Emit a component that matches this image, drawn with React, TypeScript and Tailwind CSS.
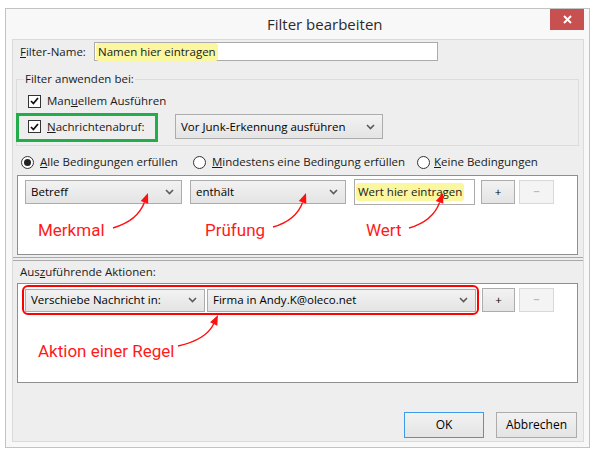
import React from "react";

type Pt = [number, number];

// Curved red pointer: quadratic curve from the label toward the control, with a filled head.
function Pointer({ s, t }: { s: Pt; t: Pt }) {
  const c: Pt = [s[0] + 0.7 * (t[0] - s[0]), s[1] - 0.2 * (s[1] - t[1])];
  const dx = t[0] - c[0];
  const dy = t[1] - c[1];
  const len = Math.hypot(dx, dy);
  const ux = dx / len;
  const uy = dy / len;
  const b: Pt = [t[0] - 10 * ux, t[1] - 10 * uy];
  const nx = -uy;
  const ny = ux;
  const p1: Pt = [b[0] + 4 * nx, b[1] + 4 * ny];
  const p2: Pt = [b[0] - 4 * nx, b[1] - 4 * ny];
  return (
    <g>
      <path
        d={`M${s[0]} ${s[1]} Q${c[0]} ${c[1]} ${b[0]} ${b[1]}`}
        fill="none"
        stroke="#ff1010"
        strokeWidth={1.4}
      />
      <polygon points={`${t[0]},${t[1]} ${p1[0]},${p1[1]} ${p2[0]},${p2[1]}`} fill="#ff1010" />
    </g>
  );
}

function Chevron() {
  return (
    <svg width="9" height="6" viewBox="0 0 9 6" className="shrink-0">
      <path d="M1 1 L4.5 4.5 L8 1" fill="none" stroke="#5b5b5b" strokeWidth="1.6" />
    </svg>
  );
}

function Combo({ className, children }: { className: string; children: React.ReactNode }) {
  return (
    <div
      className={`flex items-center justify-between border border-[#acacac] bg-gradient-to-b from-[#f2f2f2] to-[#e4e4e4] pl-[5px] pr-[7px] text-black ${className}`}
    >
      <span className="whitespace-nowrap">{children}</span>
      <Chevron />
    </div>
  );
}

function PlusBtn({ className }: { className: string }) {
  return (
    <div
      className={`flex items-center justify-center border border-[#acacac] bg-gradient-to-b from-[#f2f2f2] to-[#e4e4e4] text-black ${className}`}
    >
      +
    </div>
  );
}

function MinusBtn({ className }: { className: string }) {
  return (
    <div
      className={`flex items-center justify-center border border-[#d9d9d9] bg-[#f4f4f4] text-[#a3a3a3] ${className}`}
    >
      −
    </div>
  );
}

function CheckBox() {
  return (
    <span className="flex h-[13px] w-[13px] shrink-0 items-center justify-center border border-[#333333] bg-white">
      <svg width="9" height="8" viewBox="0 0 9 8">
        <path d="M1 4 L3.4 6.5 L8 1" fill="none" stroke="#111" strokeWidth="1.8" />
      </svg>
    </span>
  );
}

function Radio({ on }: { on?: boolean }) {
  return (
    <span className="flex h-[13px] w-[13px] shrink-0 items-center justify-center rounded-full border border-[#333333] bg-white">
      {on && <span className="h-[7px] w-[7px] rounded-full bg-[#222]" />}
    </span>
  );
}

function Mark({ children }: { children: React.ReactNode }) {
  return <span className="rounded-[3px] bg-[#fbf6a0] px-[2px] py-[1px]">{children}</span>;
}

const note = "absolute whitespace-nowrap font-['Roboto',sans-serif] text-[17px] leading-[20px] text-[#ff1a1a]";

export default function App() {
  return (
    <div className="relative h-[452px] w-[598px] overflow-hidden bg-white pl-[5px] pt-[8px] font-['Open_Sans',sans-serif] text-[11.5px] leading-[16px] text-[#1a1a1a]">
      <div className="flex h-[440px] w-[585px] flex-col border border-[#c3c3c3] bg-[#f8f8f8]">
        {/* title bar */}
        <div className="relative flex h-[30px] shrink-0 items-center">
          <span className="ml-[261px] text-[15px] font-normal text-[#2b2b2b]">Filter bearbeiten</span>
          <div className="absolute right-[5px] top-0 flex h-[21px] w-[34px] items-center justify-center bg-[#c75050]">
            <svg width="9" height="9" viewBox="0 0 9 9">
              <path d="M1 1 L8 8 M8 1 L1 8" stroke="#fff" strokeWidth="2" />
            </svg>
          </div>
        </div>

        {/* client area */}
        <div className="mx-[6px] mb-[5px] mr-[5px] flex flex-1 flex-col border border-[#dadada] bg-[#eeeeee]">
          {/* name */}
          <div className="mt-[2px] flex h-[19px] items-center pl-[7px]">
            <span className="w-[74px] shrink-0">
              <u>F</u>ilter-Name:
            </span>
            <div className="flex h-[19px] w-[344px] items-center border border-[#ababab] bg-white pl-[1px]">
              <Mark>Namen hier eintragen</Mark>
            </div>
          </div>

          {/* apply group */}
          <div className="relative ml-[3px] mr-[4px] mt-[18px] flex flex-col border border-[#dcdcdc] pb-[6px] pl-[11px] pt-[13px]">
            <span className="absolute left-[7px] top-[-9px] bg-[#eeeeee] px-[1px]">Filter anwenden bei:</span>
            <div className="flex h-[16px] items-center gap-[6px]">
              <CheckBox />
              <span>
                Man<u>u</u>ellem Ausführen
              </span>
            </div>
            <div className="mt-[5px] flex h-[25px] items-center">
              <div className="flex w-[147px] items-center gap-[6px]">
                <CheckBox />
                <span>
                  <u>N</u>achrichtenabruf:
                </span>
              </div>
              <Combo className="h-[25px] w-[208px]">Vor Junk-Erkennung ausführen</Combo>
            </div>
            <div className="absolute left-[-1px] top-[33px] h-[29px] w-[142px] border-[3px] border-[#21ad4b]" />
          </div>

          {/* match mode */}
          <div className="mt-[8px] flex h-[16px] items-center pl-[8px]">
            <div className="flex w-[172px] items-center gap-[6px]">
              <Radio on />
              <span>
                <u>A</u>lle Bedingungen erfüllen
              </span>
            </div>
            <div className="flex w-[224px] items-center gap-[6px]">
              <Radio />
              <span>
                <u>M</u>indestens eine Bedingung erfüllen
              </span>
            </div>
            <div className="flex items-center gap-[4px]">
              <Radio />
              <span>
                <u>K</u>eine Bedingungen
              </span>
            </div>
          </div>

          {/* conditions */}
          <div className="relative ml-[4px] mr-[5px] mt-[5px] h-[80px] border border-[#8f8f8f] bg-white">
            <div className="flex items-center pl-[7px] pt-[3px]">
              <Combo className="h-[24px] w-[157px]">Betreff</Combo>
              <Combo className="ml-[8px] h-[24px] w-[156px]">enthält</Combo>
              <div className="ml-[8px] flex h-[26px] w-[121px] items-center border border-[#ababab] bg-white pl-[1px]">
                <Mark>Wert hier eintragen</Mark>
              </div>
              <PlusBtn className="ml-[6px] h-[24px] w-[34px]" />
              <MinusBtn className="ml-[4px] h-[24px] w-[35px]" />
            </div>
            <span className={`${note} left-[20px] top-[44px]`}>Merkmal</span>
            <span className={`${note} left-[187px] top-[44px]`}>Prüfung</span>
            <span className={`${note} left-[348px] top-[44px]`}>Wert</span>
          </div>

          {/* splitter */}
          <div className="mt-[2px] h-[4px] border-y border-[#a9a9a9]" />

          {/* actions */}
          <div className="mt-[3px] flex h-[16px] items-center pl-[7px]">
            <span>
              Aus<u>z</u>uführende Aktionen:
            </span>
          </div>
          <div className="relative ml-[4px] mr-[5px] mt-[3px] h-[100px] border border-[#8f8f8f] bg-white">
            <div className="flex items-center pl-[7px] pt-[4px]">
              <Combo className="h-[23px] w-[180px]">Verschiebe Nachricht in:</Combo>
              <Combo className="ml-[2px] h-[23px] w-[269px]">Firma in Andy.K@oleco.net</Combo>
              <PlusBtn className="ml-[6px] h-[24px] w-[33px]" />
              <MinusBtn className="ml-[4px] h-[24px] w-[35px]" />
            </div>
            <div className="absolute left-[4px] top-[1px] h-[30px] w-[457px] rounded-[6px] border-2 border-[#ff0000]" />
            <span className={`${note} left-[20px] top-[57px]`}>Aktion einer Regel</span>
          </div>

          {/* dialog buttons */}
          <div className="mr-[6px] mt-[29px] flex justify-end gap-[12px]">
            <div className="flex h-[26px] w-[80px] items-center justify-center border border-[#3c9ae8] bg-gradient-to-b from-[#f2f2f2] to-[#e4e4e4] text-[12px] text-black">
              OK
            </div>
            <div className="flex h-[26px] w-[81px] items-center justify-center border border-[#acacac] bg-gradient-to-b from-[#f2f2f2] to-[#e4e4e4] text-[12px] text-black">
              Abbrechen
            </div>
          </div>
        </div>
      </div>

      {/* annotation pointers */}
      <svg className="pointer-events-none absolute left-0 top-0" width="598" height="452">
        <Pointer s={[113, 228]} t={[148, 193]} />
        <Pointer s={[273, 227]} t={[306, 193]} />
        <Pointer s={[409, 228]} t={[443, 193]} />
        <Pointer s={[178, 346]} t={[218, 315]} />
      </svg>
    </div>
  );
}
